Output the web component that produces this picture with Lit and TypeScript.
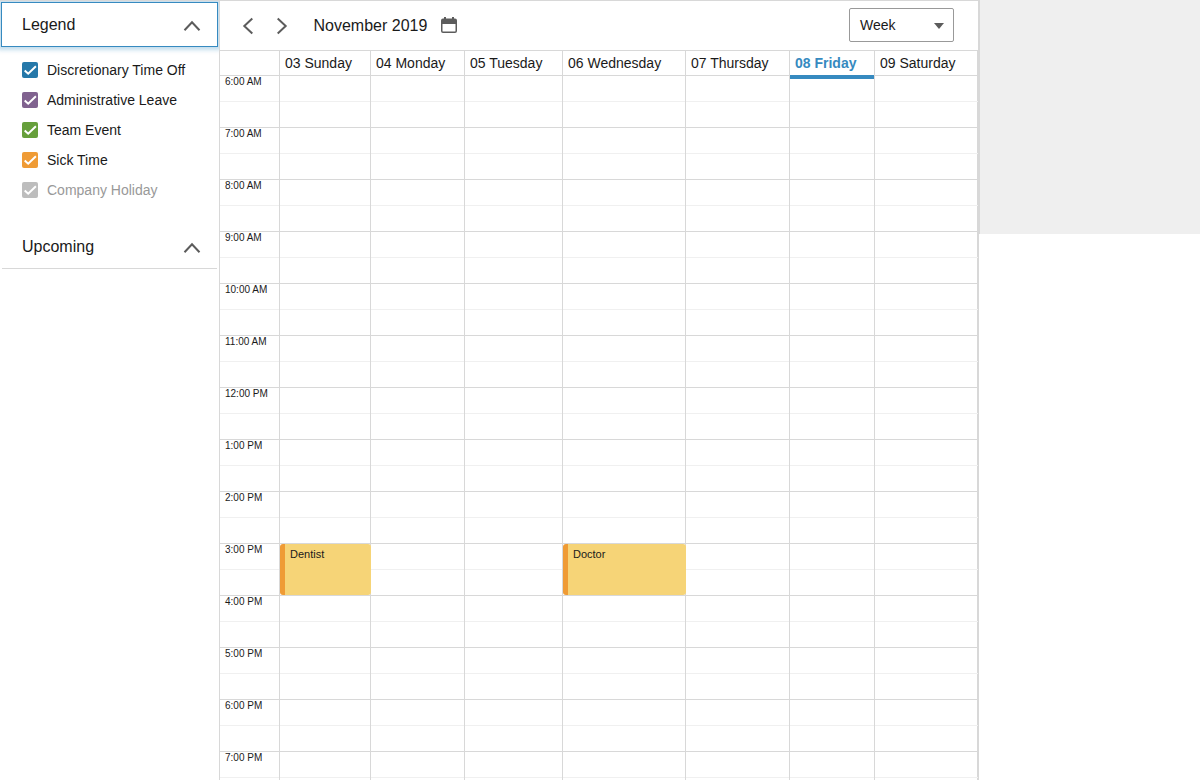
import { LitElement, html, css, svg } from "lit";
import { customElement, property } from "lit/decorators.js";
import { classMap } from "lit/directives/class-map.js";

interface CalEvent { title: string; hour: number; }
interface Day { label: string; today?: boolean; events?: CalEvent[]; }

const LEGEND = [
  { label: "Discretionary Time Off", kind: "azure" },
  { label: "Administrative Leave", kind: "amethyst" },
  { label: "Team Event", kind: "emerald" },
  { label: "Sick Time", kind: "amber" },
  { label: "Company Holiday", kind: "disabled" },
];

const DAYS: Day[] = [
  { label: "03 Sunday", events: [{ title: "Dentist", hour: 15 }] },
  { label: "04 Monday" },
  { label: "05 Tuesday" },
  { label: "06 Wednesday", events: [{ title: "Doctor", hour: 15 }] },
  { label: "07 Thursday" },
  { label: "08 Friday", today: true },
  { label: "09 Saturday" },
];

const HOURS = Array.from({ length: 14 }, (_, i) => i + 6);
const hourLabel = (h: number) => `${h > 12 ? h - 12 : h}:00 ${h < 12 ? "AM" : "PM"}`;

@customElement("legend-panel")
export class LegendPanel extends LitElement {
  static styles = css`
    :host { display: block; }
    .head {
      box-sizing: border-box; height: 45px; margin: 0 1px;
      display: flex; align-items: center; justify-content: space-between;
      padding: 0 16px 0 20px; border: 1px solid transparent; border-bottom-color: #d8d8d8;
      font-size: 16px; line-height: 20px;
    }
    .head.focused {
      border-color: #368ac0; box-shadow: 0 0 4px 3px rgba(54, 138, 192, 0.3);
      clip-path: inset(-1px -1px -10px -1px);
    }
    .head svg { display: block; margin-top: 3px; }
    .head.inset { margin: 0 2px 0 1.5px; padding-left: 20.5px; padding-right: 16px; border-left: 0; border-right: 0; }
  `;
  @property() heading = "";
  @property({ type: Boolean }) focused = false;
  render() {
    return html`
      <div class=${classMap({ head: true, focused: this.focused, inset: !this.focused })}>
        <span>${this.heading}</span>
        <svg width="18" height="12" viewBox="0 0 18 12" fill="none" stroke="#5c5c5c" stroke-width="2">
          <path d="M1.5 10.3 9 2.3l7.5 8" />
        </svg>
      </div>
      <slot></slot>
    `;
  }
}

@customElement("app-root")
export class AppRoot extends LitElement {
  static styles = css`
    :host {
      display: flex; height: 780px; overflow: hidden; background: #fff; color: #1a1a1a;
      font-family: "Liberation Sans", Arial, sans-serif;
    }
    .sidebar { flex: none; width: 219px; border-top: 1px solid #d8d8d8; box-sizing: border-box; }
    .first { padding-top: 1px; }
    .list { display: grid; grid-auto-rows: 30px; padding: 8px 0 19px 22px; }
    .item { display: flex; align-items: center; gap: 9px; font-size: 14px; line-height: 18px; }
    .box { width: 16px; height: 16px; border-radius: 2px; }
    .box svg { display: block; }
    .azure { background: #2578a9; }
    .amethyst { background: #80628f; }
    .emerald { background: #669f3b; }
    .amber { background: #ef9b35; }
    .disabled { background: #bdbdbd; }
    .muted { color: #999; }

    .calendar {
      flex: none; width: 760px; height: 780px; box-sizing: border-box; background: #fff;
      display: flex; flex-direction: column; border-left: 1px solid #d8d8d8;
    }
    .toolbar {
      box-sizing: border-box; height: 50px; display: flex; align-items: center;
      border-top: 1px solid #d8d8d8; border-right: 1px solid #d8d8d8; padding: 0 24px 2px 22px;
    }
    .arrow { margin-top: 2px; }
    .next { margin-left: 22px; }
    .month { margin: 2px 0 0 25.5px; font-size: 16px; line-height: 20px; }
    .cal { margin-left: 14px; }
    .select {
      margin-left: auto; box-sizing: border-box; width: 105px; height: 34px;
      border: 1px solid #999; border-radius: 2px; padding: 0 9px 0 10px;
      display: flex; align-items: center; justify-content: space-between; font-size: 14px;
    }
    .select svg { margin-top: 2px; }
    .grid {
      display: grid; grid-template-columns: 60px 91px 94px 98px 123px 104px 85px 104px;
      grid-template-rows: 26px; grid-auto-rows: 52px;
      border-top: 1px solid #d8d8d8; flex: 1; min-height: 0; overflow: hidden;
      box-sizing: border-box;
    }
    .dayhead, .slot, .time { box-sizing: border-box; border-right: 1px solid #d8d8d8; }
    .dayhead { border-bottom: 1px solid #d8d8d8; padding-left: 5px; height: 25px; font-size: 14px; line-height: 24px; white-space: nowrap; }
    .today { color: #368ac0; font-weight: 700; }
    .slot, .time { margin-top: -1px; height: 52px; border-bottom: 1px solid #d8d8d8; }
    .time { font-size: 10px; line-height: 12px; }
    .half { box-sizing: border-box; height: 26px; border-bottom: 1px solid #f0f0f0; }
    .time .half { padding-left: 5px; }
    .slot { position: relative; }
    .bar { height: 4px; position: absolute; top: -1px; left: 0; right: 0; background: #368ac0; }
    .last { border-right-width: 2px; }
    .last .half { margin-right: -1px; }
    .event {
      position: absolute; left: 0; right: -1px; top: 0; bottom: 0; z-index: 1;
      box-sizing: border-box; border-left: 5px solid #ef9b35; border-radius: 3px;
      background: #f6d477; padding: 4px 5px; font-size: 11px; line-height: 13px;
    }
    .outside { flex: 1; height: 234px; background: #efefef; border-left: 1px solid #d8d8d8; }
  `;

  private check() {
    return svg`<path d="M2.7 8.4 6.2 11.7 13.9 4.3" fill="none" stroke="#fff" stroke-width="2" />`;
  }

  private slotCell(day: Day, hour: number, last: boolean) {
    const event = day.events?.find((e) => e.hour === hour);
    return html`<div class=${classMap({ slot: true, last })}>
      <div class="half"></div>
      ${day.today && hour === HOURS[0] ? html`<div class="bar"></div>` : null}
      ${event ? html`<div class="event">${event.title}</div>` : null}
    </div>`;
  }

  render() {
    return html`
      <aside class="sidebar">
        <legend-panel class="first" heading="Legend" focused>
          <div class="list">
            ${LEGEND.map((l) => html`<div class="item">
              <span class="box ${l.kind}"><svg width="16" height="16" viewBox="0 0 16 16">${this.check()}</svg></span>
              <span class=${classMap({ muted: l.kind === "disabled" })}>${l.label}</span>
            </div>`)}
          </div>
        </legend-panel>
        <legend-panel heading="Upcoming"></legend-panel>
      </aside>
      <main class="calendar">
        <div class="toolbar">
          <svg class="arrow" width="12" height="18" viewBox="0 0 12 18" fill="none" stroke="#5c5c5c" stroke-width="2"><path d="M10.3 1.5 2.3 9l8 7.5" /></svg>
          <svg class="arrow next" width="12" height="18" viewBox="0 0 12 18" fill="none" stroke="#5c5c5c" stroke-width="2"><path d="M1.7 1.5 9.7 9l-8 7.5" /></svg>
          <span class="month">November 2019</span>
          <svg class="cal" width="16" height="16" viewBox="0 0 16 16" fill="#5c5c5c">
            <path fill-rule="evenodd" d="M2 1.5h1V0h2v1.5h6V0h2v1.5h1a2 2 0 0 1 2 2V14a2 2 0 0 1-2 2H2a2 2 0 0 1-2-2V3.500a2 2 0 0 1 2-2zM1.500 7v7a.6.6 0 0 0 .6.6h11.800a.6.6 0 0 0 .6-.6V7z" />
          </svg>
          <div class="select">
            <span>Week</span>
            <svg width="10" height="6" viewBox="0 0 10 6" fill="#5c5c5c"><path d="M0 0h10L5 6z" /></svg>
          </div>
        </div>
        <div class="grid">
          <div class="dayhead"></div>
          ${DAYS.map((d, i) => html`<div class=${classMap({ dayhead: true, today: !!d.today, last: i === 6 })}>${d.label}</div>`)}
          ${HOURS.map((h) => html`
            <div class="time"><div class="half">${hourLabel(h)}</div></div>
            ${DAYS.map((d, i) => this.slotCell(d, h, i === 6))}
          `)}
        </div>
      </main>
      <div class="outside"></div>
    `;
  }
}
